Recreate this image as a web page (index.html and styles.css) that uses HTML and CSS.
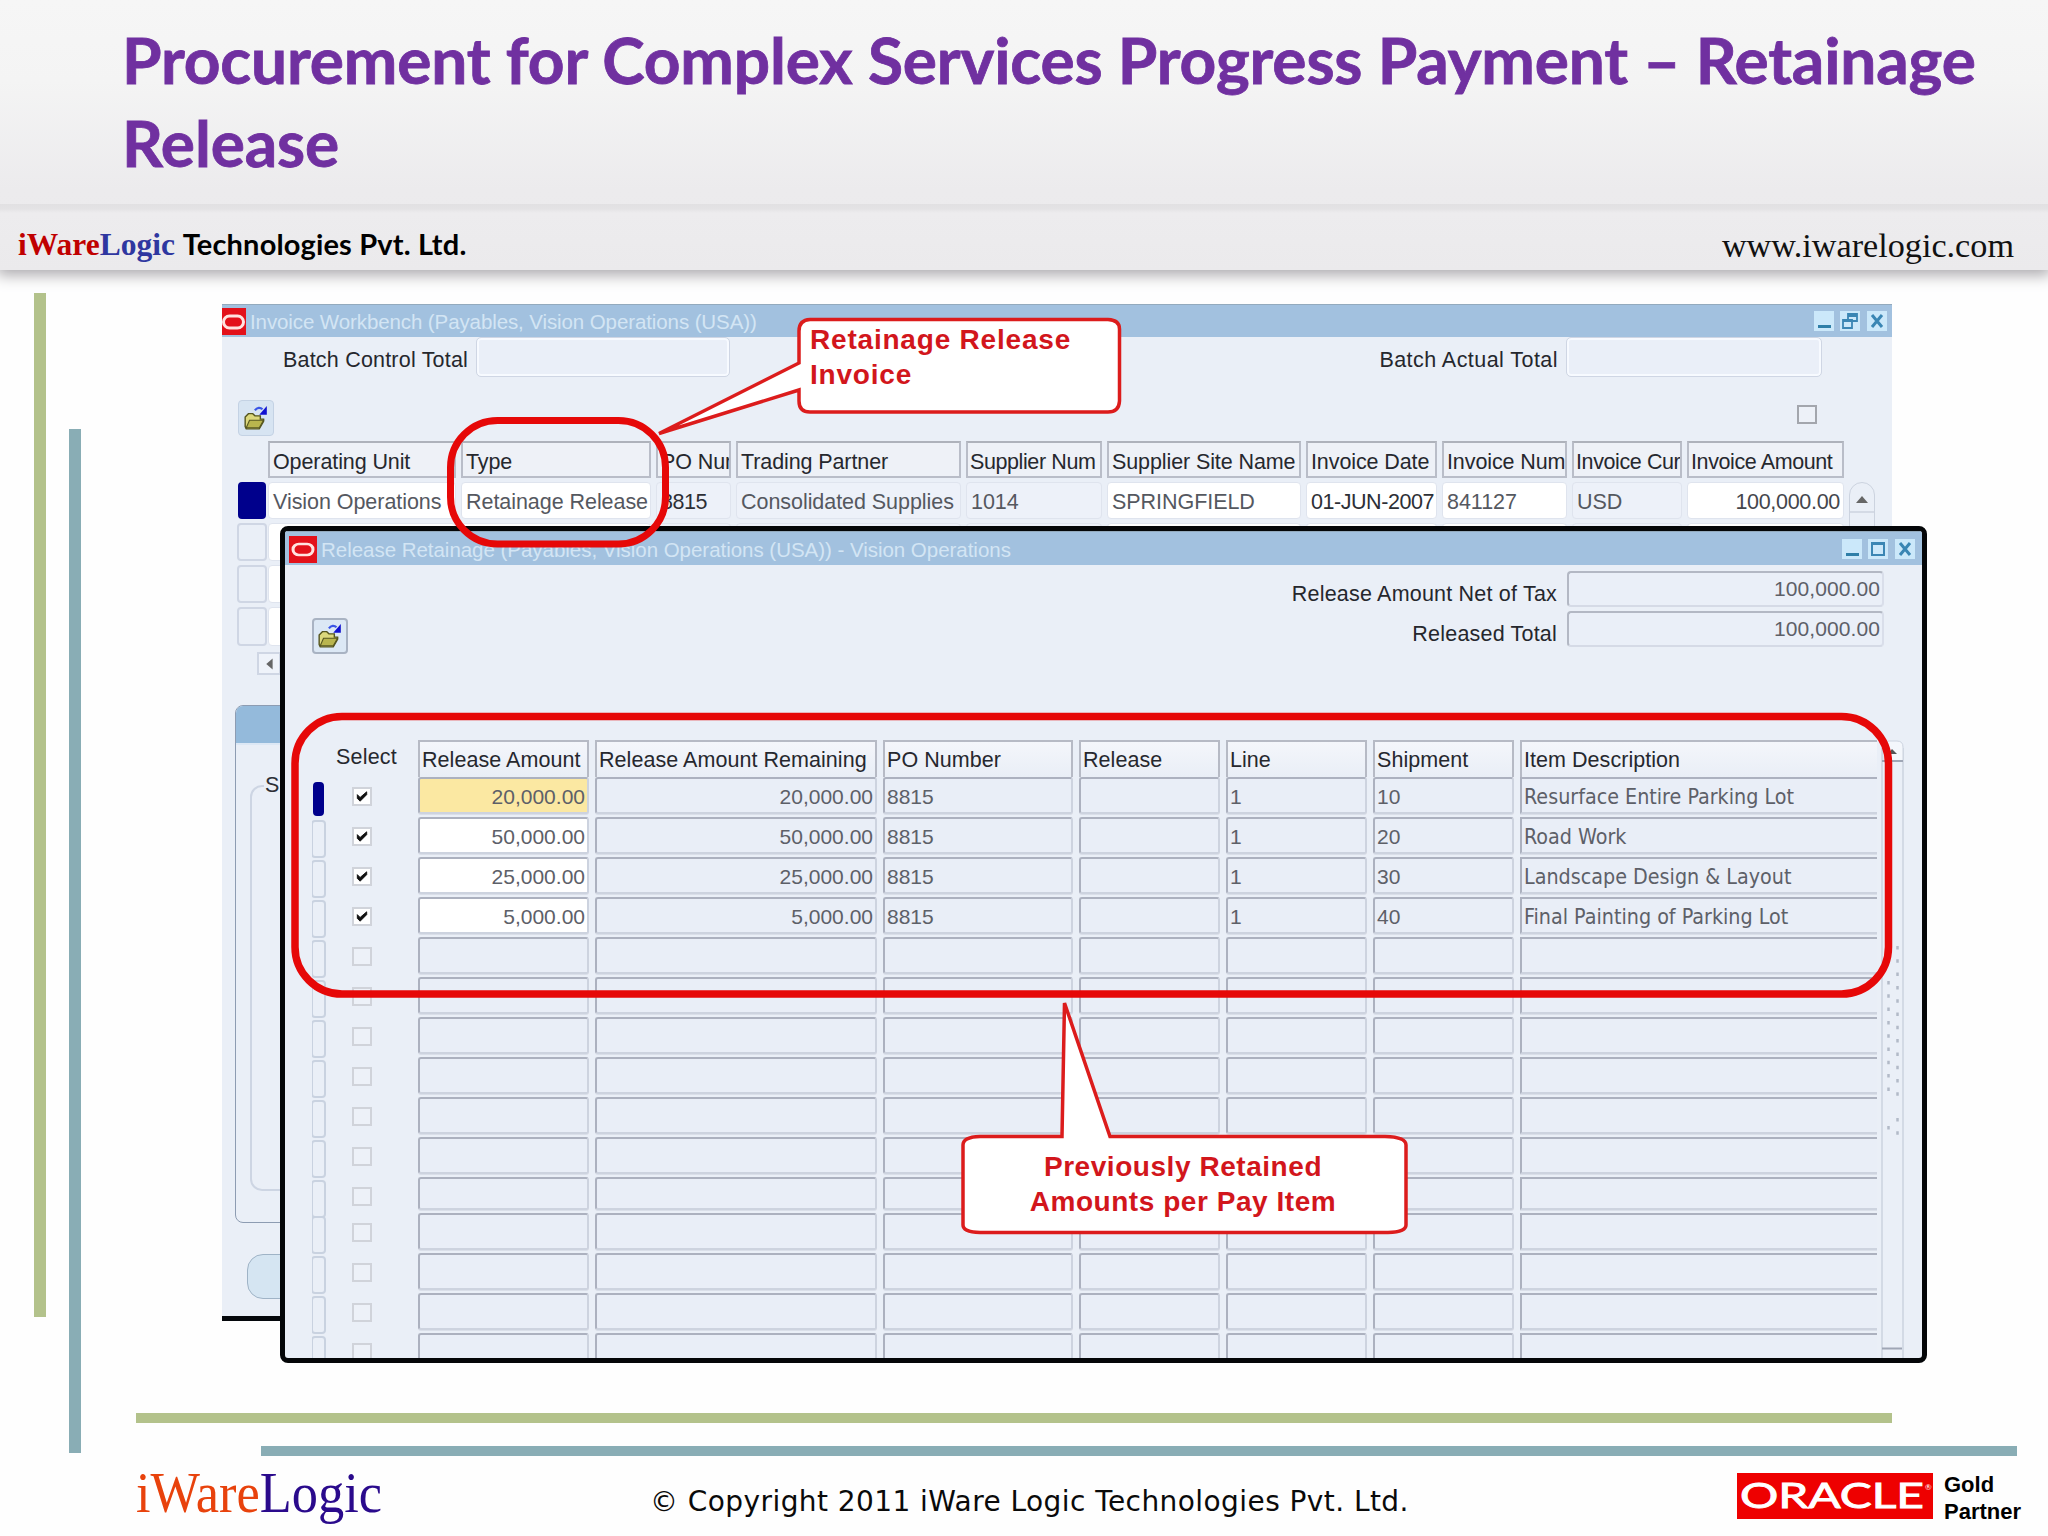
FILE: index.html
```html
<!DOCTYPE html>
<html lang="en">
<head>
<meta charset="utf-8">
<title>Procurement for Complex Services</title>
<link rel="stylesheet" href="styles.css">
</head>
<body>
<svg class="defs" width="0" height="0">
  <symbol id="folder" viewBox="0 0 24 24">
    <path d="M2 11l3-3h4l2 2h5v3h3v2l-4 7H3l-1-2z" fill="#dcd87c" stroke="#55551f" stroke-width="1.300"/>
    <path d="M6 14h13l-4 7H3z" fill="#b9b54e" stroke="#55551f" stroke-width="1"/>
    <path d="M11 5c2-3 5-3 7-1" fill="none" stroke="#3b55e6" stroke-width="2"/>
    <path d="M22 1v8h-7z" fill="#1010d0"/>
  </symbol>
  <symbol id="tick" viewBox="0 0 16 16"><path d="M3 6l3 3 7-6v3l-7 7-3-3z" fill="#111" stroke="#111"/></symbol>
</svg>
<div class="slide">
  <header class="masthead">
    <h1 class="title">Procurement for Complex Services Progress Payment – Retainage<br><span class="title-second">Release</span></h1>
    <div class="brandbar">
      <div class="company"><span class="red">iWare</span><span class="blue">Logic</span> <span class="company-rest">Technologies Pvt. Ltd.</span></div>
      <div class="site">www.iwarelogic.com</div>
    </div>
  </header>

  <div class="content">
    <div class="rails"><div class="rail green"></div><div class="rail teal"></div></div>
    <div class="main">
      <div class="canvas">

        <section class="window invoice">
          <div class="titlebar">
            <svg class="o-icon" viewBox="0 0 24 27" preserveAspectRatio="none"><rect width="24" height="27" fill="#e3111a"/><rect x="1.5" y="8" width="20" height="12" rx="6" fill="none" stroke="#ffe3e0" stroke-width="3"/></svg>
            <span class="win-title wt1">Invoice Workbench (Payables, Vision Operations (USA))</span>
            <svg class="win-buttons" viewBox="0 0 74 20"><g fill="#cbe8fa"><rect width="20" height="20"/><rect x="26" width="20" height="20"/><rect x="53" width="20" height="20"/></g><rect x="4" y="14" width="13" height="3" fill="#2f7fa8"/><path d="M34 3h9v7h-9zM34 5h9M29 9h9v8h-9zM29 10h9" fill="#cbe8fa" stroke="#3a86b4" stroke-width="1.8"/><path d="M58 4l10 12M68 4l-10 12" stroke="#3a86b4" stroke-width="3"/></svg>
          </div>
          <div class="batch">
            <span class="label">Batch Control Total</span><span class="field soft batch-a"></span>
            <span class="label batch-second">Batch Actual Total</span><span class="field soft batch-b"></span>
          </div>
          <div class="tools">
            <span class="tool"><svg><use href="#folder"/></svg></span>
            <span class="box dark"></span>
          </div>
          <div class="inv-grid" id="invoice-grid"></div>
          <div class="left-scroll"><svg viewBox="0 0 22 22"><path d="M15 5v12l-7-6z" fill="#666"/></svg></div>
          <div class="tabpanel"><div class="tab"></div><div class="group"><span class="legend">S</span></div></div>
          <div class="pill"></div>
        </section>

        <section class="window release">
          <div class="titlebar">
            <svg class="o-icon wide" viewBox="0 0 24 27" preserveAspectRatio="none"><rect width="24" height="27" fill="#e3111a"/><rect x="3.500" y="8" width="17" height="11" rx="5" fill="none" stroke="#ffe3e0" stroke-width="2.600"/></svg>
            <span class="win-title wt2">Release Retainage (Payables, Vision Operations (USA)) - Vision Operations</span>
            <svg class="win-buttons" viewBox="0 0 74 20"><g fill="#cbe8fa"><rect width="20" height="20"/><rect x="26" width="20" height="20"/><rect x="53" width="20" height="20"/></g><rect x="4" y="14" width="13" height="3" fill="#2f7fa8"/><path d="M30 4h12v12H30zM30 5h12" fill="none" stroke="#3a86b4" stroke-width="2"/><path d="M58 4l10 12M68 4l-10 12" stroke="#3a86b4" stroke-width="3"/></svg>
          </div>
          <div class="summary">
            <span class="tool raised"><svg><use href="#folder"/></svg></span>
            <div class="totals">
              <span class="label">Release Amount Net of Tax</span><span class="field total">100,000.00</span>
              <span class="label">Released Total</span><span class="field total">100,000.00</span>
            </div>
          </div>
          <div class="rel-wrap">
            <div class="rel-grid" id="release-grid"></div>
            <svg class="scroll" viewBox="1881 740 23 618"><path d="M1882 748V1358M1903 748V1358" stroke="#ccd3df" stroke-width="1.500" fill="none"/><path d="M1883 760V747q0-6 6-6h8q6 0 6 6v13" fill="#f4f7fc" stroke="#ccd3df"/><path d="M1882 761h21M1882 1348.500h20" stroke="#9fa6b5" stroke-width="2"/><path d="M1897 754l-5-5-4 5z" fill="#555"/><g stroke="#b2bac8" stroke-width="2.500" stroke-dasharray="3.500 9.800"><path d="M1888.500 981V1092M1897.500 946V1098M1888.500 1126v8M1897.500 1118v18"/></g></svg>
          </div>
        </section>

        <svg class="marks" viewBox="136 268 1912 1145">
          <path d="M810 319.500H1108Q1119.500 320 1119.500 329V401Q1119 412 1108 412H810Q799 412 799 401V390L659 433.500L799 363V331Q799 320 810 319.500Z" fill="#fff" stroke="#dc1c1c" stroke-width="3.500"/>
          <path d="M980 1136.500H1062L1064.500 1003L1110 1136.500H1385Q1406 1137 1406 1145V1225Q1406 1232 1388 1232.500H980Q963 1232 963 1225V1145Q963 1137 980 1136.500Z" fill="#fff" stroke="#dc1c1c" stroke-width="3.500"/>
          <rect x="450.500" y="420.500" width="215" height="123.500" rx="47" fill="none" stroke="#e60808" stroke-width="7"/>
          <rect x="295" y="716.500" width="1593.500" height="277.500" rx="47" fill="none" stroke="#e60808" stroke-width="7.500"/>
        </svg>
        <div class="note note-a">Retainage Release<br>Invoice</div>
        <div class="note note-b">Previously Retained<br>Amounts per Pay Item</div>
      </div>
      <div class="bar green"></div>
      <div class="bar teal"></div>
      <footer class="footer">
        <svg class="logo" viewBox="0 0 250 70"><text x="0" y="48" textLength="246" lengthAdjust="spacingAndGlyphs"><tspan fill="#e8420c">iWare</tspan><tspan fill="#2a0a8c">Logic</tspan></text></svg>
        <span class="copyright">© Copyright 2011 iWare Logic Technologies Pvt. Ltd.</span>
        <svg class="oracle" viewBox="0 0 196 46"><rect width="196" height="46" fill="#ee0000"/><text class="oracle-name" x="3" y="34.500" textLength="184" lengthAdjust="spacingAndGlyphs">ORACLE</text><text class="oracle-reg" x="188" y="17">®</text></svg>
        <div class="partner">Gold<br>Partner</div>
      </footer>
    </div>
  </div>
</div>
<script src="grids.js"></script>
</body>
</html>
```
FILE: styles.css
```css
* { box-sizing: border-box; }
body { margin: 0; background: #fdfdfd; font-family: "Liberation Sans", Arial, sans-serif; }
svg { display: block; }
.defs { position: absolute; }
.slide { width: 2048px; height: 1536px; overflow: hidden; display: flex; flex-direction: column; background: #fefefe; }

.masthead { height: 270px; margin-bottom: -2px; flex: none; display: flex; flex-direction: column; background: linear-gradient(#f6f6f6, #f4f4f4 30%, #ecebed 70%, #ebeaec); box-shadow: 0 2px 14px 3px #aaa8ac; }
.title { margin: 0; padding: 18px 0 0 122px; height: 204px; font: 700 64px/83px Lato, Carlito, sans-serif; letter-spacing: -0.15px; color: #7030a0; -webkit-text-stroke: 0.8px #7030a0; white-space: nowrap; }
.brandbar { flex: 1; display: flex; justify-content: space-between; padding: 0 34px 0 18px; background: linear-gradient(#e1e0e2, #e4e3e5 5px, #edecee 9px, #ebeaec); line-height: 40px; white-space: nowrap; }
.company { padding-top: 20px; font: 700 31.5px/40px "Liberation Serif", serif; }
.red { color: #c00000; }
.blue { color: #2f37a0; }
.company-rest { font: 700 29px/40px Lato, Carlito, sans-serif; letter-spacing: 0.15px; color: #000; }
.site { padding-top: 22px; font: 34.2px/40px "Liberation Serif", serif; color: #111; }

.content { flex: 1; display: flex; }
.rails { width: 136px; flex: none; display: flex; gap: 23px; padding-left: 34px; }
.rail { width: 12px; height: 1024px; margin-top: 25px; }
.rail.teal { margin-top: 161px; }
.green { background: #b3c28b; }
.teal { background: #89adb5; }
.main { flex: 1; display: flex; flex-direction: column; }
.canvas { position: relative; height: 1145px; flex: none; }
.bar { height: 10px; width: 1756px; flex: none; }
.bar.teal { margin: 23px 0 0 125px; }

.window { position: absolute; background: #eaeff7; color: #2d2f36; font-size: 21.5px; overflow: hidden; white-space: nowrap; }
.invoice { left: 86px; top: 36px; width: 1670px; height: 1017px; border-bottom: 5px solid #05080c; }
.release { left: 144px; top: 258px; width: 1647px; height: 837px; border: 5px solid #040608; border-radius: 8px; }
.titlebar { height: 33px; display: flex; align-items: center; background: #a2c1df; border-top: 1px solid #93aabd; }
.release .titlebar { height: 34px; padding-top: 1px; }
.o-icon { width: 24px; height: 27px; }
.o-icon.wide { width: 28px; margin-left: 4px; }
.win-title { margin-left: 4px; padding-top: 1px; font-size: 20.5px; letter-spacing: -0.1px; color: #d3e5f4; }
.wt2 { letter-spacing: -0.03px; }
.win-buttons { width: 74px; height: 20px; margin: 0 4px 0 auto; }
.release .win-buttons { margin-right: 6px; }

.label { padding-top: 7px; line-height: 31px; letter-spacing: 0.2px; color: #25272d; }
.field { border: 2px solid #f7faff; outline: 1px solid #cfd6e4; border-radius: 4px; background: #eaeff8; }
.batch { display: flex; margin-top: 1px; height: 38px; padding: 0 71px 0 61px; }
.batch-a { width: 252px; margin-left: 9px; }
.batch-second { margin-left: auto; letter-spacing: 0.45px; }
.batch-b { width: 254px; margin-left: 9px; }
.tools { display: flex; justify-content: space-between; margin-top: 24px; height: 36px; padding: 0 75px 0 16px; }
.tool { width: 36px; height: 36px; padding: 4px; border: 1px solid #c4d2e4; border-radius: 4px; background: #d7e4f2; flex: none; }
.tool svg { width: 26px; height: 26px; }
.tool.raised { border: 2px solid #a9b3c3; background: #dce8f5; padding: 3px; }
.box { width: 20px; height: 19px; border: 2px solid #d0d3da; background: #edf1f8; }
.box.dark { margin-top: 5px; border-color: #a3a6ad; }

.inv-grid { margin: 5px 0 0 15px; display: grid; gap: 4px 5px; grid-template-columns: 26px 188px 190px 75px 225px 136px 194px 131px 125px 110px 157px 26px; grid-template-rows: 37px 37px 38px 38px 39px; }
.inv-head { padding: 4px 0 0 3px; line-height: 31px; letter-spacing: -0.1px; overflow: hidden; border: 2px solid #b9bdc8; border-top-color: #aeb2bb; background: #eef1f7; color: #26282e; }
.inv-head.tight { padding-left: 2px; letter-spacing: -0.4px; }
.inv-cell { padding: 2px 0 0 4px; line-height: 35px; letter-spacing: -0.05px; overflow: hidden; border: 1px solid #dfe4ee; border-radius: 4px; background: #edf1f9; color: #55585f; }
.inv-cell.white { background: #fff; }
.inv-cell.dark { color: #2d2f36; letter-spacing: -0.45px; }
.inv-cell.num { text-align: right; padding-right: 3px; letter-spacing: -0.3px; color: #44464c; }
.inv-mark { width: 30px; border: 2px solid #cfd6e4; border-radius: 4px; }
.inv-mark.on { width: 28px; margin-left: 1px; background: #00008c; border-color: #00008c; }
.inv-scroll { border: 1.5px solid #ccd3df; border-radius: 13px 13px 0 0; height: 60px; }
.left-scroll { width: 24px; height: 23px; margin: 6px 0 0 35px; border: 2px solid #cfd6e4; background: #eff3fa; }
.left-scroll svg { width: 20px; height: 20px; }
.tabpanel { margin: 30px 0 0 13px; width: 500px; height: 518px; border: 1.5px solid #8d9cb2; border-radius: 8px; }
.tab { height: 39px; background: #94badb; border-radius: 7px 0 0; border-bottom: 2px solid #dde8f5; }
.group { margin: 40px 0 0 14px; height: 406px; border: 2px solid #cdd5e3; border-radius: 12px; }
.legend { display: block; width: 20px; margin: -22px 0 0 12px; padding: 0 1px; line-height: 40px; height: 36px; background: #eaeff7; }
.pill { margin: 31px 0 0 25px; width: 300px; height: 45px; border: 1.5px solid #9fb3c6; border-radius: 16px; background: #d5e5f2; }

.summary { display: flex; justify-content: space-between; height: 175px; padding: 6px 38px 0 27px; }
.summary .tool { margin-top: 47px; }
.totals { display: grid; grid-template-columns: auto 317px; grid-template-rows: 36px 36px; gap: 4px 10px; text-align: right; }
.totals .label { padding-top: 9px; line-height: 29px; }
.total { border: 2px solid; border-color: #b3b8c4 #d9deea #d5dae6 #b3b8c4; outline: 0; padding: 1px 2px 0 0; line-height: 30px; color: #5d6068; font-size: 21px; letter-spacing: 0.1px; }
.rel-wrap { display: flex; gap: 4px; height: 618px; padding-left: 27px; }
.rel-grid { display: grid; column-gap: 6px; width: 1565px; grid-template-columns: 14px 80px 171px 282px 190px 141px 141px 141px 357px; grid-template-rows: 37px repeat(10, 40px) 36px repeat(3, 40px) 25px; overflow: hidden; }
.rel-head { padding: 3px 0 0 2px; line-height: 30px; letter-spacing: 0.05px; border: 2px solid #b6bac5; border-bottom: 0; background: linear-gradient(#f4f6fb, #e9eef6); color: #26282e; }
.rel-head.last, .rel-cell.last { border-right: 0; border-radius: 0; }
.rel-select { padding: 5px 0 0 4px; line-height: 24px; color: #26282e; letter-spacing: 0.2px; }
.rel-cell { height: 37px; padding: 2px 2px 0 2px; line-height: 31px; font-size: 21px; border: 2px solid; border-color: #acb1bf #cdd3df #cdd3df #acb1bf; border-radius: 3px; background: #e9eef7; box-shadow: 0 1px 0 #dadfe9; color: #5d6068; }
.rel-cell.white { background: #fff; }
.rel-cell.active { background: #fbe8a2; }
.rel-cell.num { text-align: right; }
.rel-cell.desc { font: 21.3px/31px "DejaVu Sans Condensed", "DejaVu Sans", sans-serif; font-stretch: condensed; }
.rel-mark { height: 38px; margin: 3px 0 0 -1px; border: 2px solid #c9d2e0; border-radius: 4px; }
.rel-mark.on { width: 11px; height: 34px; margin: 5px 0 0 1px; background: #00008c; border-color: #00008c; }
.rel-check { margin: 10px 0 0 20px; }
.rel-check svg { width: 16px; height: 15px; }
.rel-check.on { background: #fff; }
.scroll { width: 23px; height: 618px; }

.marks { position: absolute; inset: 0; width: 1912px; height: 1145px; }
.note { position: absolute; font-weight: 700; font-size: 28px; line-height: 35px; color: #d2161c; white-space: nowrap; }
.note-a { left: 674px; top: 54px; letter-spacing: 0.8px; }
.note-b { left: 827px; top: 881px; width: 440px; text-align: center; letter-spacing: 0.55px; }

.footer { flex: 1; display: flex; position: relative; }
.logo { width: 250px; height: 70px; margin-top: 8px; overflow: visible; font: 57px "Liberation Serif", serif; }
.copyright { margin: 24px 0 0 264px; width: 759px; font: 28px/44px "DejaVu Sans", sans-serif; letter-spacing: 0.43px; color: #0a0a0a; white-space: nowrap; }
.oracle { width: 196px; height: 46px; margin: 17px 0 0 328px; }
.oracle-name { font: 400 34px Lato, sans-serif; fill: #fff; stroke: #fff; stroke-width: 0.9px; }
.oracle-reg { font: 8px Lato, sans-serif; fill: #fff; }
.partner { margin: 15px 0 0 11px; font-size: 22px; font-weight: 700; line-height: 27px; color: #000; }
```
FILE: grids.js
```js
const add = (parent, cls, text = "") => {
  const el = document.createElement("div");
  el.className = cls;
  el.textContent = text;
  parent.append(el);
  return el;
};

const invoice = document.getElementById("invoice-grid");
add(invoice, "");
["Operating Unit", "Type", "PO Num", "Trading Partner", "Supplier Num", "Supplier Site Name",
 "Invoice Date", "Invoice Num", "Invoice Cur", "Invoice Amount"]
  .forEach((t, c) => add(invoice, "inv-head" + ([4, 8, 9].includes(c) ? " tight" : ""), t));
add(invoice, "");

const whites = [0, 1, 5, 6, 7, 9];
const first = ["Vision Operations", "Retainage Release", "8815", "Consolidated Supplies", "1014",
  "SPRINGFIELD", "01-JUN-2007", "841127", "USD", "100,000.00"];
for (let r = 0; r < 4; r++) {
  add(invoice, "inv-mark" + (r ? "" : " on"));
  first.forEach((t, c) => add(invoice, "inv-cell" + (whites.includes(c) ? " white" : "") +
    (c === 2 || c === 6 ? " dark" : "") + (c === 9 ? " num" : ""), r ? "" : t));
  add(invoice, r ? "" : "inv-scroll").innerHTML = r ? "" :
    '<svg viewBox="0 0 24 30"><path d="M6 20l6-7 6 7z" fill="#666"/><path d="M0 29h24" stroke="#ccd3df" stroke-width="1.500"/></svg>';
}

const release = document.getElementById("release-grid");
add(release, "");
add(release, "rel-select", "Select");
["Release Amount", "Release Amount Remaining", "PO Number", "Release", "Line", "Shipment", "Item Description"]
  .forEach((t, c) => add(release, "rel-head" + (c === 6 ? " last" : ""), t));

const items = [
  ["20,000.00", "10", "Resurface Entire Parking Lot"],
  ["50,000.00", "20", "Road Work"],
  ["25,000.00", "30", "Landscape Design & Layout"],
  ["5,000.00", "40", "Final Painting of Parking Lot"],
];
for (let r = 0; r < 15; r++) {
  const item = items[r];
  add(release, "rel-mark" + (r ? "" : " on"));
  add(release, "box rel-check" + (item ? " on" : "")).innerHTML = item ? '<svg><use href="#tick"/></svg>' : "";
  const values = item ? [item[0], item[0], "8815", "", "1", item[1], item[2]] : Array(7).fill("");
  values.forEach((t, c) => {
    const cell = add(release, "rel-cell" + (c < 2 ? " num" : "") + (c === 6 ? " last desc" : "") +
      (item && c === 0 ? (r ? " white" : " active") : ""), t);
    if (r === 10) cell.style.height = "33px";
  });
}
```
